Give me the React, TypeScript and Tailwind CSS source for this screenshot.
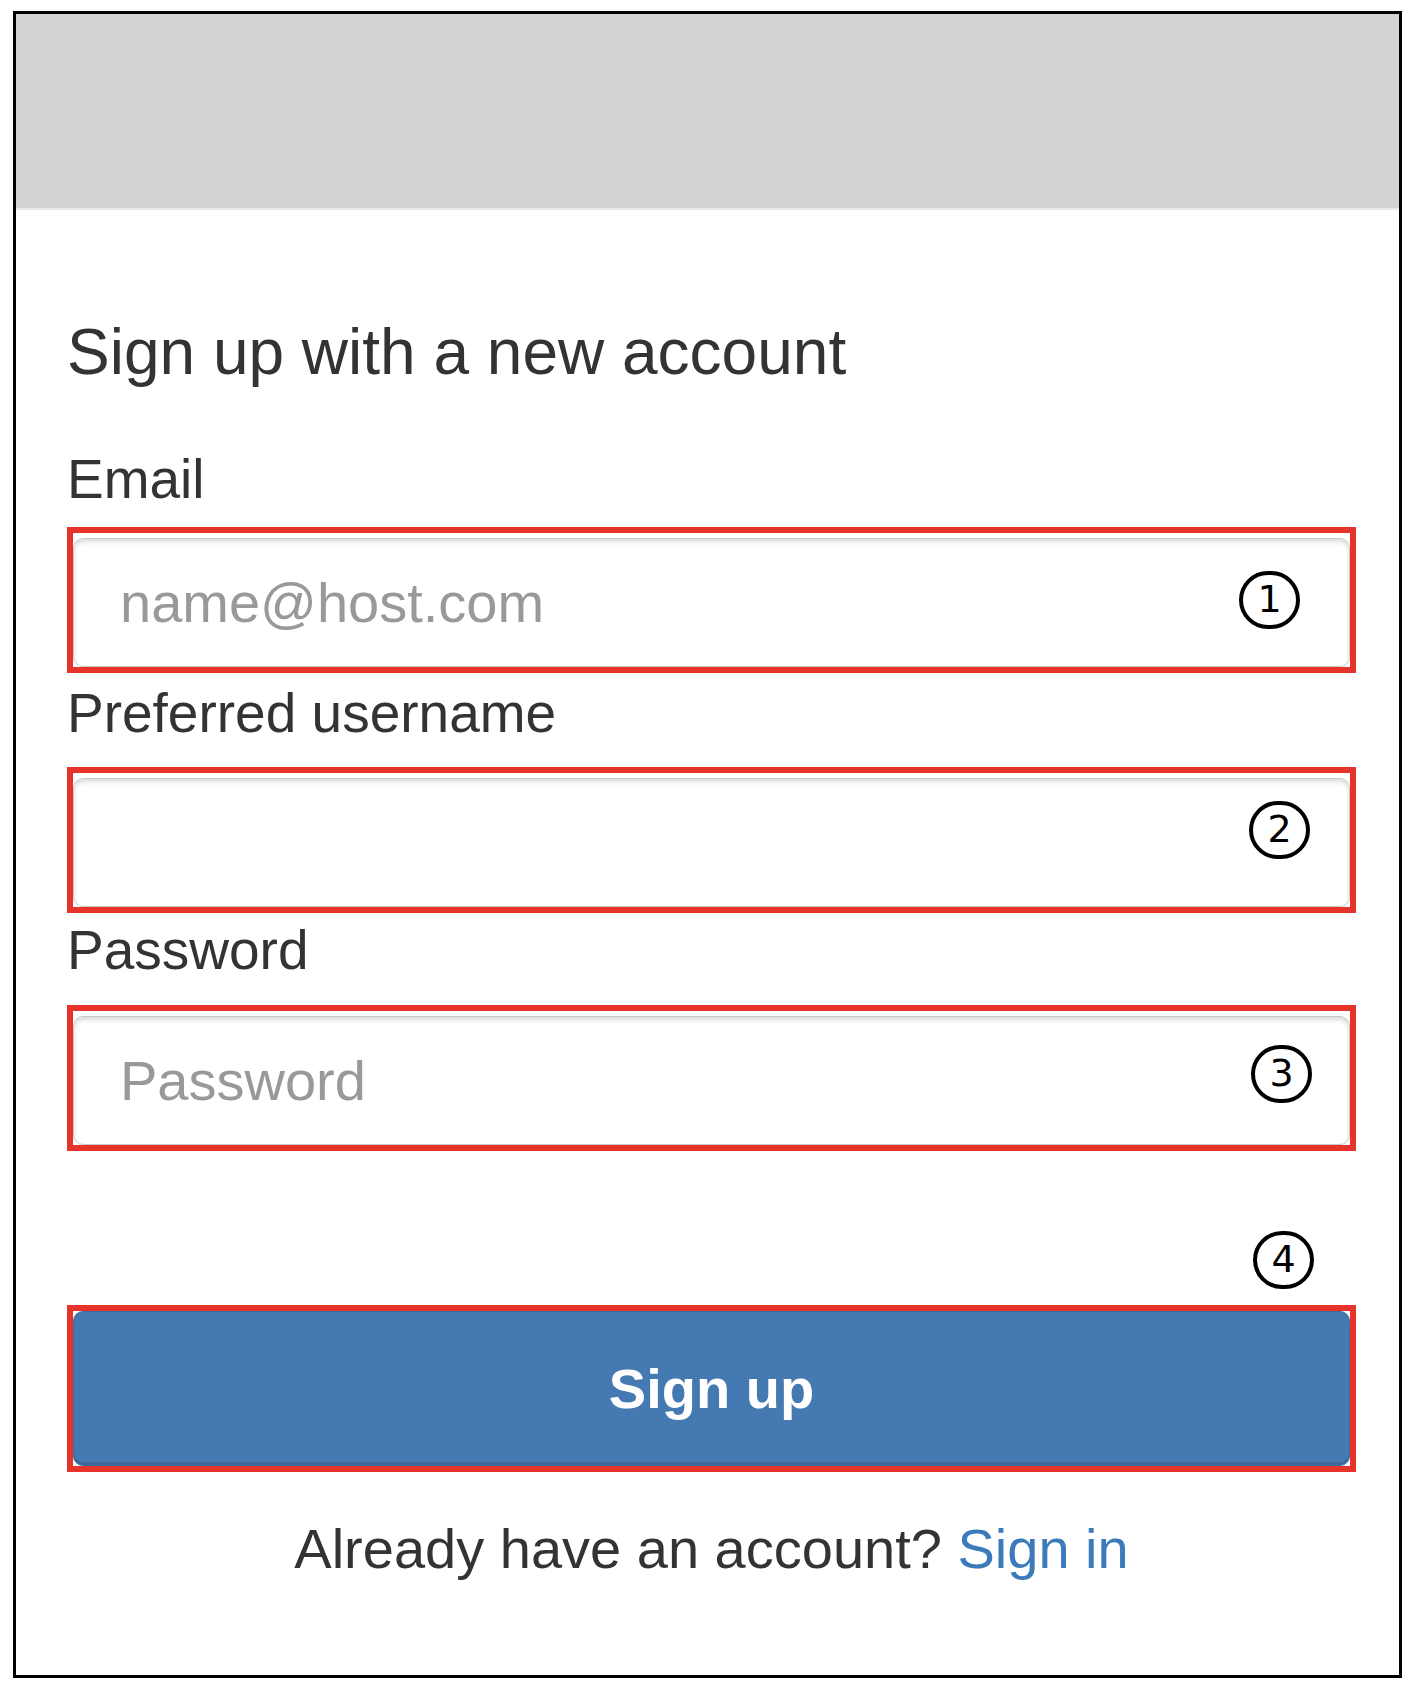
const Marker = ({n}: {n: string}) => (
    <div className="flex h-[58px] w-[61px] items-center justify-center rounded-full border-[4px] border-black bg-white">
        <span className="text-[38px] leading-none text-black pb-[3px] font-['DejaVu_Sans',sans-serif]">{n}</span>
    </div>
);

type FieldProps = {placeholder?: string, type?: string, marker: string, markerClass: string};
const Field = ({placeholder, type = "text", marker, markerClass}: FieldProps) => (
    <div className="relative border-[6px] border-[#e7342a] pt-[5px]">
        <input
            type={type}
            placeholder={placeholder}
            className="block h-[129px] w-full rounded-[10px] border border-[#c8c8c8] bg-white pl-[46px] text-[56px] text-[#555] placeholder:text-[#999] shadow-[inset_0_3px_4px_rgba(0,0,0,0.14)] outline-none"
        />
        <div className={`absolute ${markerClass}`}>
            <Marker n={marker}/>
        </div>
    </div>
);

export default function App() {
    return (
        <div className="min-h-[1690px] bg-white pt-[11px] pl-[13px] font-['Liberation_Sans',Arial,sans-serif] text-[#333]">
            <div className="flex h-[1667px] w-[1389px] flex-col border-[3px] border-black">
                <div className="h-[196px] border-b-2 border-[#e9e9e9] bg-[#d3d3d3]"/>
                <div className="flex flex-col pl-[51px] pr-[43px]">
                    <h2 className="mt-[110px] text-[64px] leading-none">Sign up with a new account</h2>

                    <label className="mt-[68px] text-[55px] leading-none">Email</label>
                    <div className="mt-[20px]">
                        <Field placeholder="name@host.com" marker="1" markerClass="right-[50px] top-1/2 -translate-y-1/2"/>
                    </div>

                    <label className="mt-[13px] text-[55px] leading-none">Preferred username</label>
                    <div className="mt-[26px]">
                        <Field marker="2" markerClass="right-[40px] top-[28px]"/>
                    </div>

                    <label className="mt-[10px] text-[55px] leading-none">Password</label>
                    <div className="mt-[27px]">
                        <Field type="password" placeholder="Password" marker="3" markerClass="right-[38px] top-[34px]"/>
                    </div>

                    <div className="mt-[80px] flex justify-end pr-[42px]">
                        <Marker n="4"/>
                    </div>

                    <div className="mt-[16px] border-[6px] border-[#e7342a]">
                        <button className="flex h-[155px] w-full items-center justify-center rounded-[10px] border border-[#3b6ca3] bg-[#4579b1] text-[56px] font-bold text-white shadow-[inset_0_-3px_0_rgba(0,0,0,0.12)]">
                            Sign up
                        </button>
                    </div>

                    <p className="mt-[49px] text-center text-[56px] leading-none">
                        Already have an account? <a className="text-[#3c7bba]" href="#">Sign in</a>
                    </p>
                </div>
            </div>
        </div>
    );
}
